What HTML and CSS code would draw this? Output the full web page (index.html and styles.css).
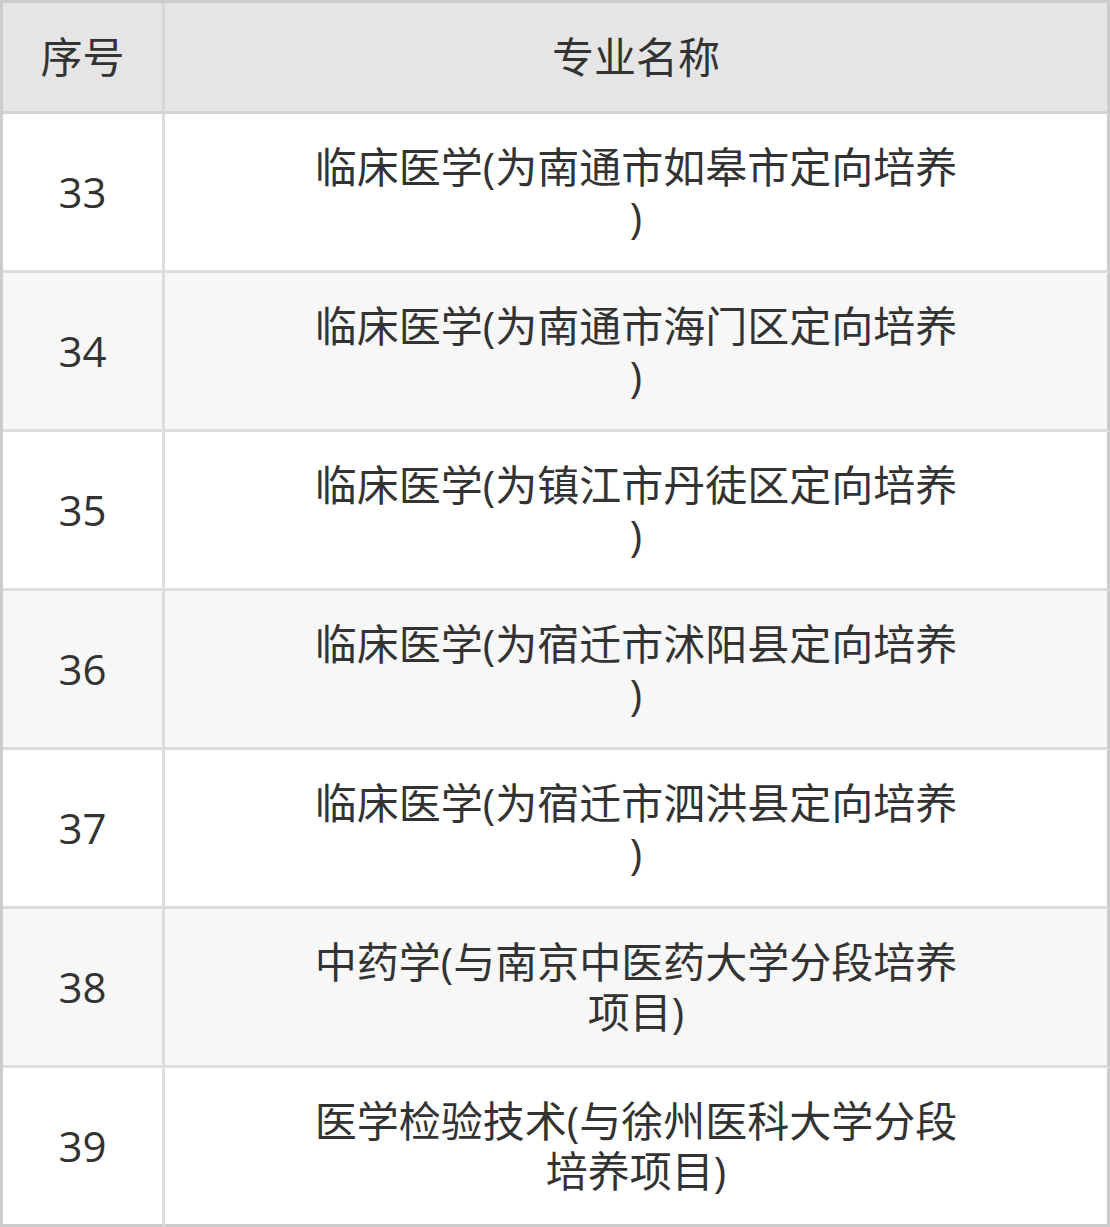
FILE: index.html
```html
<!DOCTYPE html>
<html lang="zh-CN">
<head>
<meta charset="utf-8">
<title>专业名称</title>
<link rel="stylesheet" href="styles.css">
</head>
<body>
<table class="major-table">
  <thead>
    <tr>
      <th class="col-no">序号</th>
      <th class="col-name">专业名称</th>
    </tr>
  </thead>
  <tbody>
    <tr><td class="col-no">33</td><td class="col-name"><div class="name">临床医学(为南通市如皋市定向培养)</div></td></tr>
    <tr><td class="col-no">34</td><td class="col-name"><div class="name">临床医学(为南通市海门区定向培养)</div></td></tr>
    <tr><td class="col-no">35</td><td class="col-name"><div class="name">临床医学(为镇江市丹徒区定向培养)</div></td></tr>
    <tr><td class="col-no">36</td><td class="col-name"><div class="name">临床医学(为宿迁市沭阳县定向培养)</div></td></tr>
    <tr><td class="col-no">37</td><td class="col-name"><div class="name">临床医学(为宿迁市泗洪县定向培养)</div></td></tr>
    <tr><td class="col-no">38</td><td class="col-name"><div class="name">中药学(与南京中医药大学分段培养项目)</div></td></tr>
    <tr><td class="col-no">39</td><td class="col-name"><div class="name">医学检验技术(与徐州医科大学分段培养项目)</div></td></tr>
  </tbody>
</table>
</body>
</html>
```

FILE: styles.css
```css
html, body {
  margin: 0;
  padding: 0;
  background: #ffffff;
}

.major-table {
  width: 1110px;
  border-collapse: separate;
  border-spacing: 0;
  border-top: 3px solid #cccccc;
  border-left: 3px solid #cccccc;
  table-layout: fixed;
  font-family: "Open Sans", "Noto Sans CJK SC", sans-serif;
  font-size: 42px;
  line-height: 50px;
  color: #333333;
}

.major-table th,
.major-table td {
  padding: 0;
  text-align: center;
  vertical-align: middle;
  border-right: 3px solid #dddddd;
  border-bottom: 3px solid #dddddd;
  font-weight: normal;
}

.major-table th {
  height: 108px;
  background: #e5e5e5;
  border-right-color: #d6d6d6;
  border-bottom-color: #d2d2d2;
}

.major-table td {
  height: 156px;
}

.major-table .col-no {
  width: 159px;
}

.major-table th.col-name,
.major-table td.col-name {
  border-right-color: #cccccc;
}

.major-table tbody tr:nth-child(even) td {
  background: #f7f7f7;
}

.major-table tbody tr:last-child td {
  border-bottom-color: #cccccc;
}

.name {
  width: 646px;
  margin: 0 auto;
  line-break: anywhere;
}
```
